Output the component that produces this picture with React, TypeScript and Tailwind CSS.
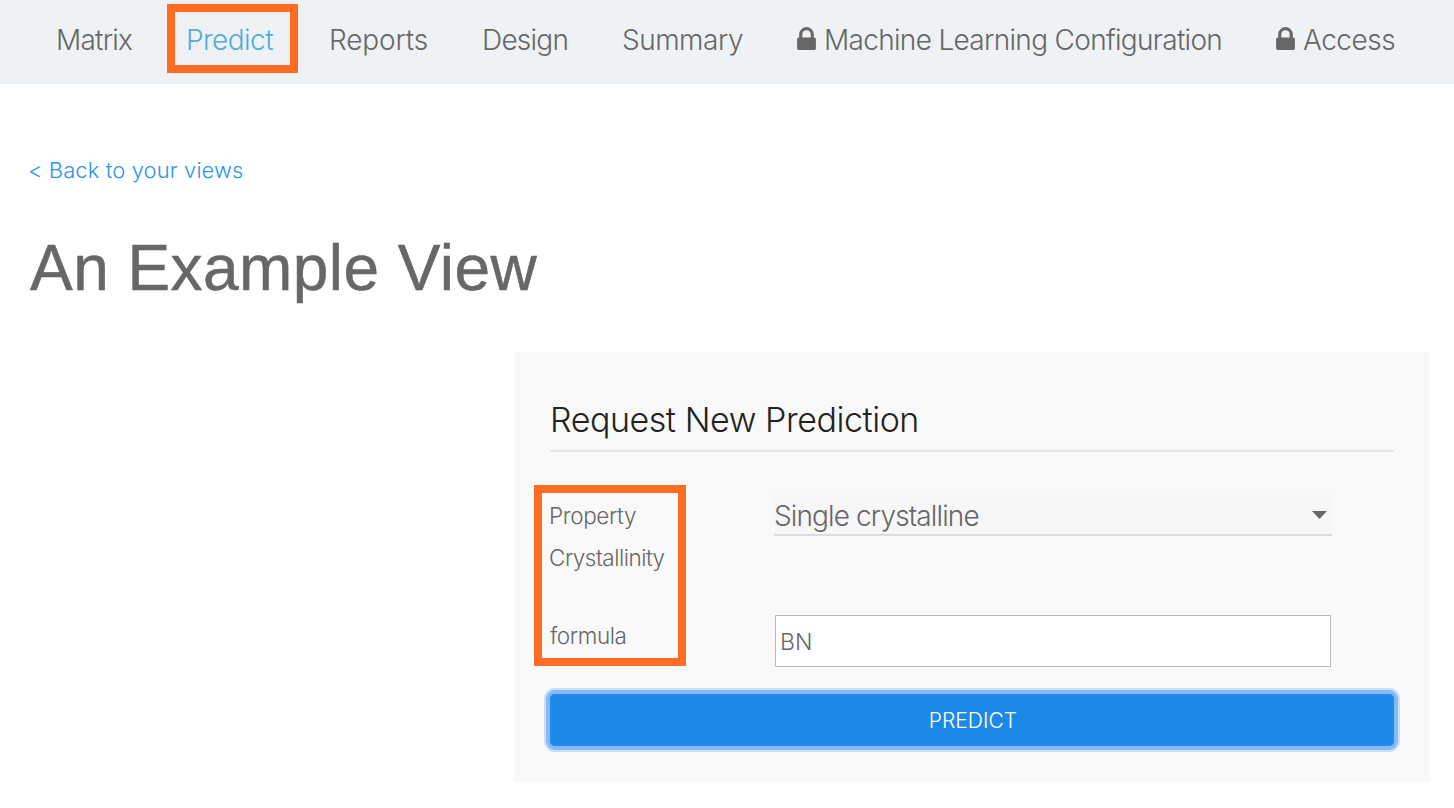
function LockIcon() {
  return (
    <svg viewBox="0 128 1152 1408" className="mb-[2px] h-[23px] w-[19px] shrink-0 fill-[#676767]">
      <path d="M320 768h512v-192q0-106-75-181t-181-75-181 75-75 181v192zM1152 864v576q0 40-28 68t-68 28h-960q-40 0-68-28t-28-68v-576q0-40 28-68t68-28h32v-192q0-184 132-316t316-132 316 132 132 316v192h32q40 0 68 28t28 68z" />
    </svg>
  );
}

function NavBar() {
  return (
    <nav className="flex h-[84px] items-start whitespace-nowrap bg-[#eef2f5] pl-[56px] text-[28px] leading-[80px] tracking-[-0.65px] text-[#676767]">
      <a className="w-[130px] tracking-[-0.75px]">Matrix</a>
      <a className="relative w-[143px] tracking-[-0.55px] text-[#54ace0]">
        Predict
        <span className="absolute left-[-19px] top-[4px] h-[69px] w-[131px] border-8 border-[#ff6c22]" />
      </a>
      <a className="w-[153px] tracking-[-0.15px]">Reports</a>
      <a className="w-[140px] tracking-[-0.75px]">Design</a>
      <a className="w-[175px] tracking-[-0.5px]">Summary</a>
      <a className="flex h-[78px] w-[479px] items-center">
        <LockIcon />
        <span className="ml-[8px] mt-[2px] tracking-[-0.68px]">Machine Learning Configuration</span>
      </a>
      <a className="flex h-[78px] items-center">
        <LockIcon />
        <span className="ml-[8px] mt-[2px] tracking-[-0.5px]">Access</span>
      </a>
    </nav>
  );
}

function PredictionPanel() {
  return (
    <section className="ml-[514px] mt-[52px] h-[430px] w-[916px] bg-[#f9f9f9] px-9 pt-[36px]">
      <h2 className="h-[64px] border-b-2 border-[#e4e4e4] text-[34px] leading-[64px] tracking-[-0.45px] text-[#222]">
        Request New Prediction
      </h2>
      <div className="relative flex h-[163px]">
        <div className="-ml-px w-[225px] pt-[43px] text-[22.5px] leading-[42px] tracking-[-0.35px]">
          <div>Property</div>
          <div className="tracking-[-0.5px]">Crystallinity</div>
        </div>
        <div className="mt-[43px] flex h-[41px] w-[558px] items-center justify-between border-b-2 border-[#dcdcdc] bg-[#f7f7f7] pr-[5px]">
          <span className="mt-[3px] text-[28px] leading-[36px] tracking-[-0.88px]">Single crystalline</span>
          <svg viewBox="0 0 15 8" className="h-[8px] w-[15px] fill-[#676767]">
            <path d="M0 0h15L7.5 8z" />
          </svg>
        </div>
        <div className="absolute left-[-16px] top-[33px] h-[181px] w-[152px] border-8 border-[#ff6c22]" />
      </div>
      <div className="flex h-[52px]">
        <label className="w-[225px] text-[22.5px] leading-[42px] tracking-[-0.4px]">formula</label>
        <div className="h-[52px] w-[556px] border border-[#bbb] bg-white pl-[4px] text-[23px] leading-[53px]">BN</div>
      </div>
      <button className="mt-[27px] block h-[52px] w-full rounded-[5px] bg-[#1d89e7] pl-[2px] text-[21px] font-light leading-[54px] text-white shadow-[0_0_0_4px_#84bafa,0_0_0_6px_#c9dff7,inset_0_0_0_2px_#2489ec]">
        PREDICT
      </button>
    </section>
  );
}

export default function App() {
  return (
    <div className="h-[808px] w-[1454px] overflow-hidden bg-white font-['Inter',sans-serif] font-light text-[#676767]">
      <NavBar />
      <a className="ml-[28px] mt-[66px] block h-[40px] text-[22px] leading-[40px] tracking-[0.1px] text-[#2d96ea]">&lt; Back to your views</a>
      <h1 className="ml-[30px] mt-[30px] h-[80px] font-['Liberation_Sans',sans-serif] text-[64px] font-normal leading-[96px] tracking-[0.45px] [-webkit-text-stroke:0.5px_#676767]">
        An Example View
      </h1>
      <PredictionPanel />
    </div>
  );
}
